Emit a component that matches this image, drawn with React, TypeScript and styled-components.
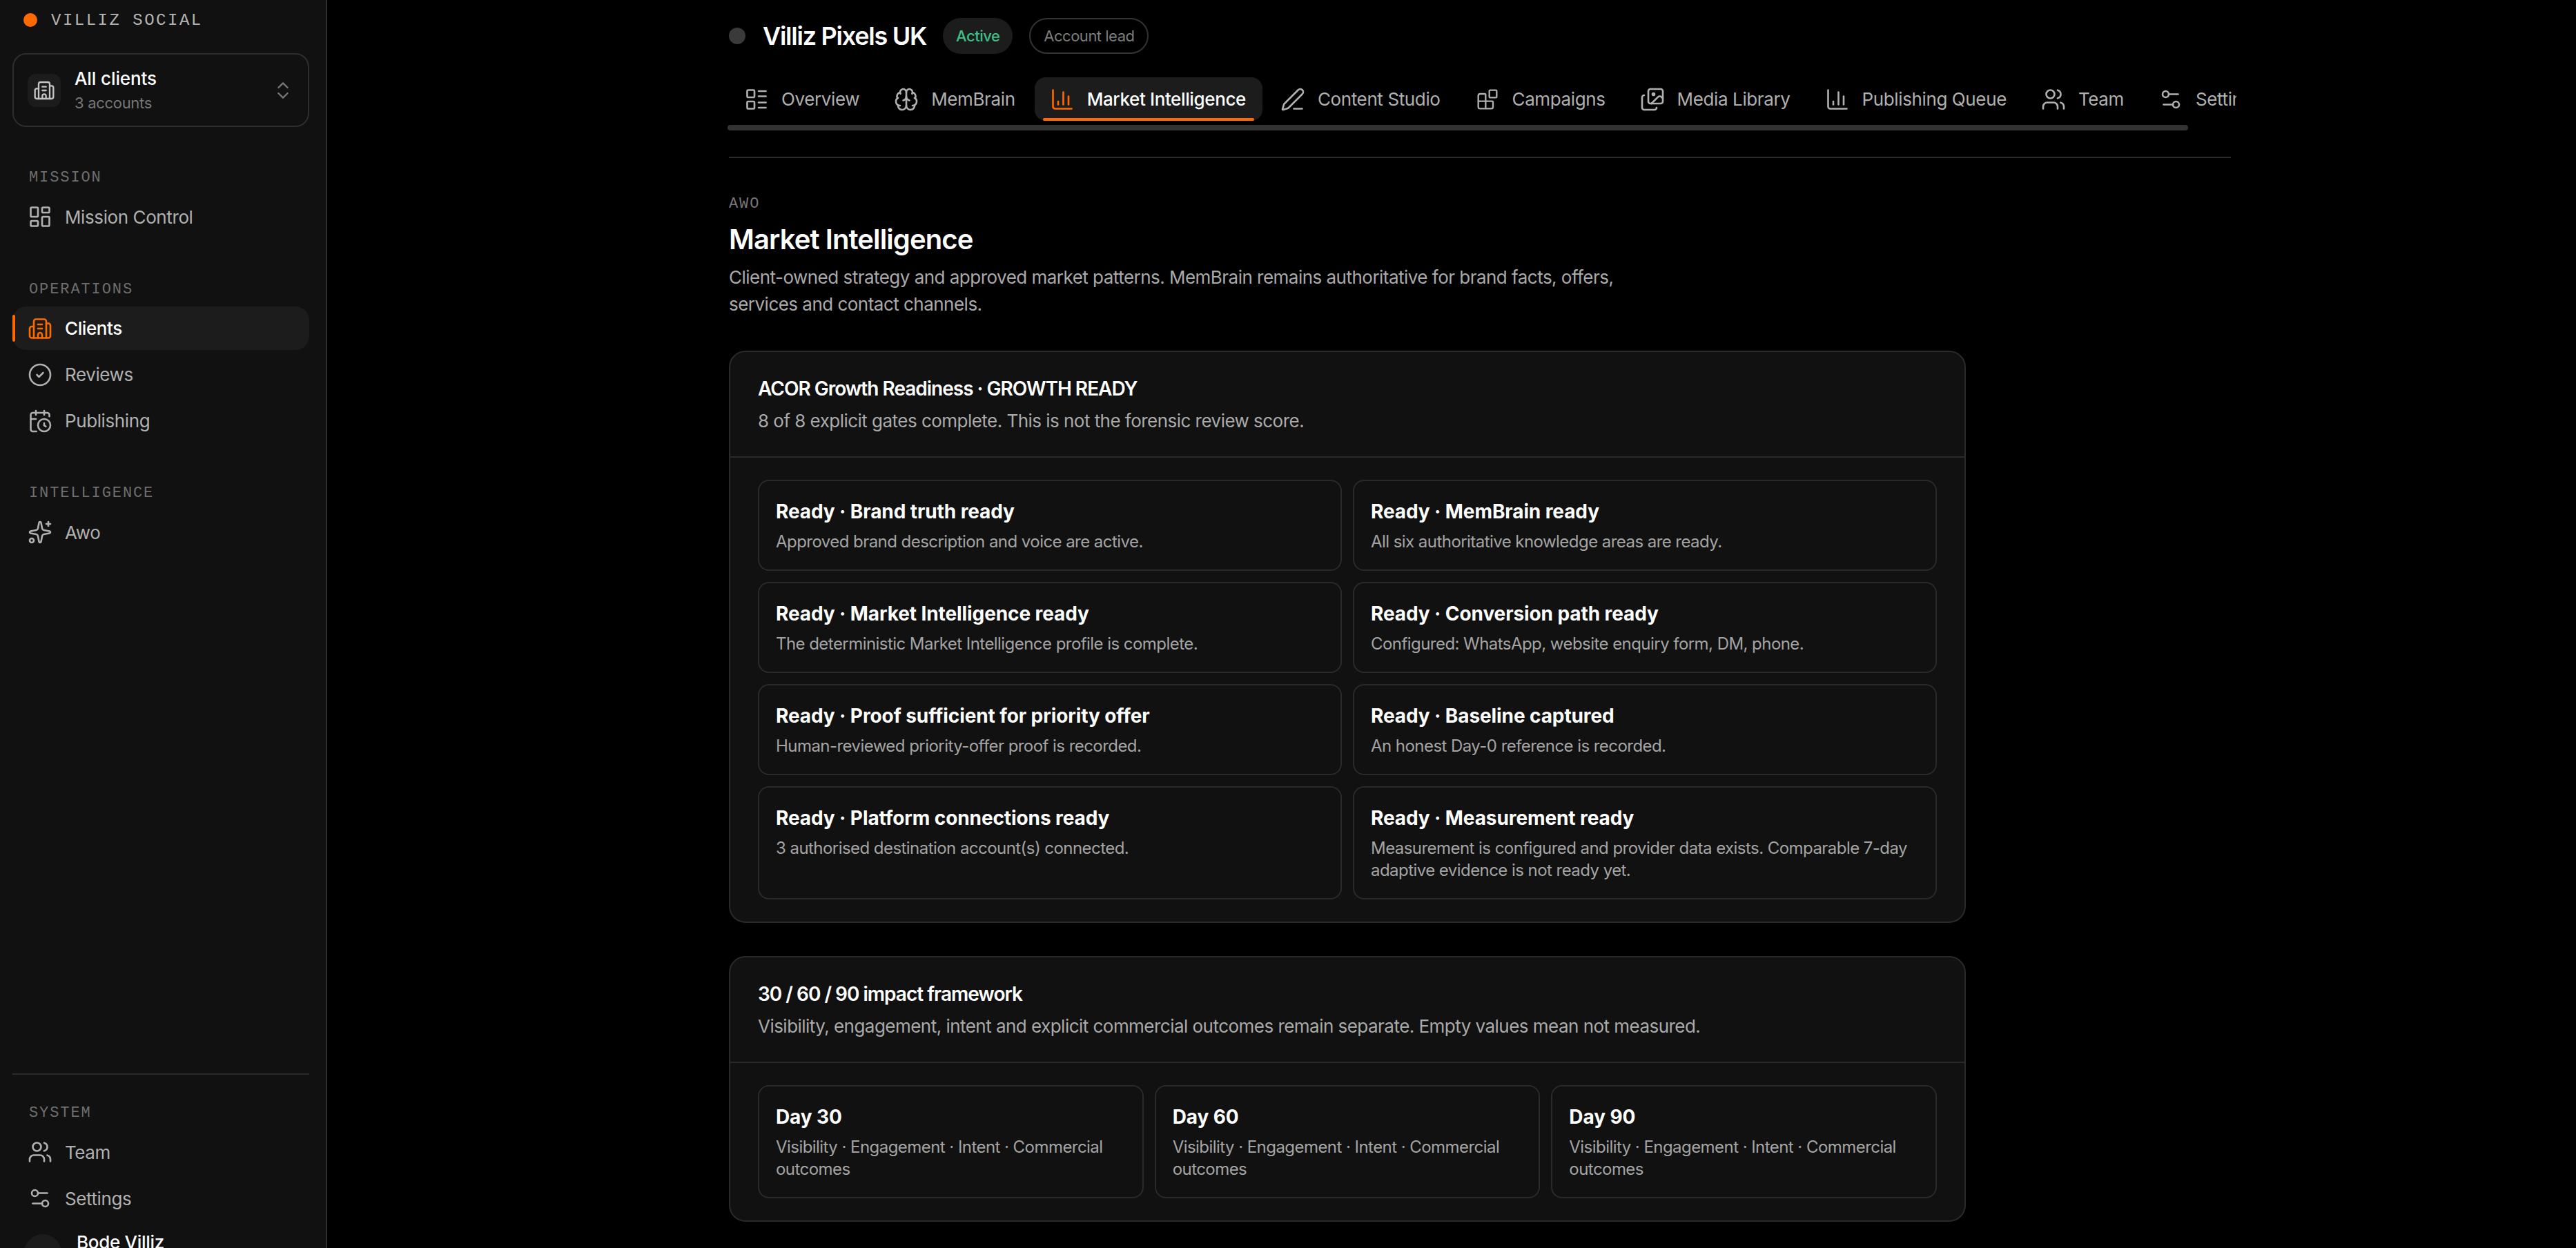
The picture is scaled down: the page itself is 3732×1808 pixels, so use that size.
import { FunctionComponent } from "react";
import styled, { createGlobalStyle } from "styled-components";
import {
  Blocks,
  Brain,
  Building2,
  CalendarClock,
  ChartColumn,
  ChevronsUpDown,
  CircleCheck,
  Images,
  LayoutDashboard,
  LayoutList,
  LucideIcon,
  PenLine,
  Settings2,
  Sparkles,
  Users,
} from "lucide-react";

const GlobalStyle = createGlobalStyle`
  html, body {
    margin: 0;
    height: 100%;
    background: #000;
    overflow: hidden;
  }
  * { box-sizing: border-box; }
  body {
    font-family: Inter, "Liberation Sans", sans-serif;
    color: #fff;
  }
`;

const Shell = styled.div`
  display: flex;
  height: 1808px;
  overflow: hidden;
`;

const Sidebar = styled.aside`
  width: 474px;
  flex-shrink: 0;
  height: 100%;
  display: flex;
  flex-direction: column;
  overflow: hidden;
  background: #111;
  border-right: 2px solid #2e2e2e;
  padding: 0 24px 0 18px;
`;

const Logo = styled.div`
  display: flex;
  align-items: center;
  gap: 20px;
  height: 24px;
  margin: 17px 0 36px 16px;
  font-family: "Liberation Mono", monospace;
  font-size: 24px;
  letter-spacing: 2.5px;
  color: #b4b4b4;
  flex-shrink: 0;
`;

const LogoDot = styled.span`
  width: 20px;
  height: 20px;
  border-radius: 50%;
  background: #ff6a00;
`;

const Switcher = styled.div`
  height: 107px;
  flex-shrink: 0;
  display: flex;
  align-items: center;
  padding: 0 20px;
  border: 2px solid #2e2e2e;
  border-radius: 20px;
  color: #777;
`;

const SwitcherIcon = styled.div`
  width: 48px;
  height: 48px;
  border-radius: 12px;
  background: #1c1c1c;
  display: flex;
  align-items: center;
  justify-content: center;
  color: #c4c4c4;
  margin-right: 20px;
`;

const SwitcherText = styled.div`
  flex: 1;
`;

const SwitcherName = styled.div`
  font-size: 26px;
  line-height: 36px;
  font-weight: 500;
  color: #fff;
  letter-spacing: -0.1px;
`;

const SwitcherMeta = styled.div`
  font-size: 22px;
  line-height: 34px;
  color: #777;
  letter-spacing: -0.3px;
`;

const NavArea = styled.nav`
  flex: 1;
  min-height: 0;
`;

const NavSection = styled.div`
  margin-top: 60px;
`;

const NavLabel = styled.div`
  height: 24px;
  line-height: 27px;
  margin: 0 0 14.5px 24px;
  font-family: "Liberation Mono", monospace;
  font-size: 22px;
  letter-spacing: 1.9px;
  color: #6e6e6e;
`;

const NavItem = styled.div<{ $active?: boolean }>`
  position: relative;
  height: 63px;
  margin-bottom: 4px;
  display: flex;
  align-items: center;
  gap: 18px;
  padding-left: 22px;
  border-radius: 20px;
  font-size: 26px;
  letter-spacing: -0.4px;
  font-weight: ${(p) => (p.$active ? 500 : 400)};
  background: ${(p) => (p.$active ? "#1c1c1c" : "transparent")};
  color: ${(p) => (p.$active ? "#fff" : "#b0b0b0")};
  svg {
    color: ${(p) => (p.$active ? "#ff6a00" : "#b0b0b0")};
  }
`;

const ActiveBar = styled.span`
  position: absolute;
  left: 0;
  top: 12px;
  bottom: 12px;
  width: 4px;
  border-radius: 2px;
  background: #ff6a00;
`;

const SidebarFooter = styled.div`
  height: 253px;
  flex-shrink: 0;
  border-top: 2px solid #2a2a2a;
  padding-top: 42px;
`;

const SystemItems = styled.div`
  margin-bottom: 20px;
`;

const UserRow = styled.div`
  display: flex;
  align-items: flex-start;
  gap: 22px;
  padding-left: 17px;
`;

const Avatar = styled.div`
  width: 54px;
  height: 54px;
  border-radius: 50%;
  background: #1c1c1c;
`;

const UserName = styled.div`
  font-size: 26px;
  line-height: 36px;
  font-weight: 500;
  margin-top: -6px;
  letter-spacing: -0.3px;
`;

const Main = styled.main`
  flex: 1;
  min-width: 0;
  background: #000;
  padding: 26px 500px 0 582px;
`;

const ClientHeader = styled.div`
  display: flex;
  align-items: center;
  height: 52px;
`;

const ClientDot = styled.span`
  width: 24px;
  height: 24px;
  border-radius: 50%;
  background: #3a3a3a;
  margin-right: 25px;
`;

const ClientName = styled.h2`
  margin: 0 24px 0 0;
  font-size: 36px;
  font-weight: 600;
  letter-spacing: -1.25px;
`;

const Pill = styled.span<{ $outline?: boolean }>`
  height: 52px;
  display: flex;
  align-items: center;
  padding: 0 19px;
  margin-right: 24px;
  border-radius: 26px;
  font-size: 22px;
  letter-spacing: -0.5px;
  background: ${(p) => (p.$outline ? "transparent" : "#1c1c1c")};
  border: ${(p) => (p.$outline ? "2px solid #333" : "none")};
  color: ${(p) => (p.$outline ? "#7d7d7d" : "#3fbf87")};
  font-weight: ${(p) => (p.$outline ? 400 : 500)};
`;

const TabScroller = styled.div`
  width: 2184px;
  margin-top: 34px;
  overflow: hidden;
`;

const TabRow = styled.div`
  display: flex;
  gap: 4px;
  width: max-content;
`;

const TabIconBox = styled.span`
  width: 36px;
  height: 36px;
  display: flex;
  align-items: center;
  justify-content: center;
`;

const Tab = styled.div<{ $active?: boolean }>`
  position: relative;
  height: 63px;
  display: flex;
  align-items: center;
  gap: 18px;
  padding: 0 24px 0 22px;
  border-radius: 16px;
  font-size: 26px;
  letter-spacing: -0.38px;
  font-weight: ${(p) => (p.$active ? 500 : 400)};
  background: ${(p) => (p.$active ? "#1c1c1c" : "transparent")};
  color: ${(p) => (p.$active ? "#fff" : "#b0b0b0")};
  svg {
    color: ${(p) => (p.$active ? "#ff6a00" : "#b0b0b0")};
  }
`;

const TabUnderline = styled.span`
  position: absolute;
  left: 12px;
  right: 12px;
  bottom: 0;
  height: 4px;
  border-radius: 2px;
  background: #ff6a00;
`;

const ScrollThumb = styled.div`
  width: 2116px;
  height: 8px;
  margin: 6px 0 0 -2px;
  border-radius: 4px;
  background: #333;
`;

const Rule = styled.hr`
  margin: 38px 0 0;
  border: none;
  height: 2px;
  background: #2a2a2a;
`;

const Eyebrow = styled.div`
  margin-top: 54px;
  height: 24px;
  line-height: 26px;
  font-family: "Liberation Mono", monospace;
  font-size: 22px;
  letter-spacing: 1.9px;
  color: #777;
`;

const PageTitle = styled.h1`
  margin: 12px 0 0;
  font-size: 40px;
  line-height: 56px;
  font-weight: 600;
  letter-spacing: -0.9px;
`;

const PageIntro = styled.p`
  margin: 8px 0 0;
  max-width: 1290px;
  font-size: 26px;
  line-height: 38.5px;
  color: #aaa;
  letter-spacing: -0.52px;
`;

const Panel = styled.section`
  width: 1792px;
  margin-top: 48px;
  background: #111;
  border: 2px solid #2a2a2a;
  border-radius: 24px;
`;

const PanelHead = styled.div`
  padding: 33px 40px 32px;
  border-bottom: 2px solid #2a2a2a;
`;

const PanelTitle = styled.h3`
  margin: 0;
  font-size: 28px;
  line-height: 40px;
  font-weight: 600;
  letter-spacing: -1px;
`;

const PanelSub = styled.p`
  margin: 8px 0 0;
  font-size: 26px;
  line-height: 38px;
  color: #aaa;
  letter-spacing: -0.53px;
`;

const PanelGrid = styled.div<{ $cols: number }>`
  display: grid;
  grid-template-columns: repeat(${(p) => p.$cols}, 1fr);
  gap: 16px;
  padding: 32px 40px;
`;

const Gate = styled.div`
  border: 2px solid #2a2a2a;
  border-radius: 16px;
  padding: 24px;
`;

const GateTitle = styled.div`
  font-size: 28px;
  line-height: 40px;
  font-weight: 700;
  letter-spacing: -0.1px;
`;

const GateText = styled.div`
  margin-top: 8px;
  font-size: 24px;
  line-height: 32px;
  color: #a4a4a4;
  letter-spacing: -0.55px;
`;

type NavEntry = { label: string; icon: LucideIcon; active?: boolean; iconSize?: number };

const navSections: { title: string; items: NavEntry[] }[] = [
  { title: "MISSION", items: [{ label: "Mission Control", icon: LayoutDashboard }] },
  {
    title: "OPERATIONS",
    items: [
      { label: "Clients", icon: Building2, active: true },
      { label: "Reviews", icon: CircleCheck },
      { label: "Publishing", icon: CalendarClock },
    ],
  },
  { title: "INTELLIGENCE", items: [{ label: "Awo", icon: Sparkles }] },
];

const tabs: NavEntry[] = [
  { label: "Overview", icon: LayoutList },
  { label: "MemBrain", icon: Brain },
  { label: "Market Intelligence", icon: ChartColumn, active: true },
  { label: "Content Studio", icon: PenLine },
  { label: "Campaigns", icon: Blocks, iconSize: 32 },
  { label: "Media Library", icon: Images },
  { label: "Publishing Queue", icon: ChartColumn },
  { label: "Team", icon: Users },
  { label: "Settings", icon: Settings2 },
];

const gates = [
  ["Ready · Brand truth ready", "Approved brand description and voice are active."],
  ["Ready · MemBrain ready", "All six authoritative knowledge areas are ready."],
  ["Ready · Market Intelligence ready", "The deterministic Market Intelligence profile is complete."],
  ["Ready · Conversion path ready", "Configured: WhatsApp, website enquiry form, DM, phone."],
  ["Ready · Proof sufficient for priority offer", "Human-reviewed priority-offer proof is recorded."],
  ["Ready · Baseline captured", "An honest Day-0 reference is recorded."],
  ["Ready · Platform connections ready", "3 authorised destination account(s) connected."],
  [
    "Ready · Measurement ready",
    "Measurement is configured and provider data exists. Comparable 7-day adaptive evidence is not ready yet.",
  ],
];

const days = ["Day 30", "Day 60", "Day 90"];

const renderNavItem = ({ label, icon: Icon, active }: NavEntry) => (
  <NavItem key={label} $active={active}>
    {active && <ActiveBar />}
    <Icon size={36} strokeWidth={1.75} />
    {label}
  </NavItem>
);

const App: FunctionComponent = () => {
  return (
    <Shell>
      <GlobalStyle />
      <Sidebar>
        <Logo>
          <LogoDot />
          VILLIZ SOCIAL
        </Logo>
        <Switcher>
          <SwitcherIcon>
            <Building2 size={32} strokeWidth={1.75} />
          </SwitcherIcon>
          <SwitcherText>
            <SwitcherName>All clients</SwitcherName>
            <SwitcherMeta>3 accounts</SwitcherMeta>
          </SwitcherText>
          <ChevronsUpDown size={32} strokeWidth={1.75} />
        </Switcher>
        <NavArea>
          {navSections.map((section) => (
            <NavSection key={section.title}>
              <NavLabel>{section.title}</NavLabel>
              {section.items.map(renderNavItem)}
            </NavSection>
          ))}
        </NavArea>
        <SidebarFooter>
          <NavLabel>SYSTEM</NavLabel>
          <SystemItems>
            {renderNavItem({ label: "Team", icon: Users })}
            {renderNavItem({ label: "Settings", icon: Settings2 })}
          </SystemItems>
          <UserRow>
            <Avatar />
            <UserName>Bode Villiz</UserName>
          </UserRow>
        </SidebarFooter>
      </Sidebar>
      <Main>
        <ClientHeader>
          <ClientDot />
          <ClientName>Villiz Pixels UK</ClientName>
          <Pill>Active</Pill>
          <Pill $outline>Account lead</Pill>
        </ClientHeader>
        <TabScroller>
          <TabRow>
            {tabs.map(({ label, icon: Icon, active, iconSize }) => (
              <Tab key={label} $active={active}>
                <TabIconBox>
                  <Icon size={iconSize ?? 36} strokeWidth={1.75} />
                </TabIconBox>
                {label}
                {active && <TabUnderline />}
              </Tab>
            ))}
          </TabRow>
        </TabScroller>
        <ScrollThumb />
        <Rule />
        <Eyebrow>AWO</Eyebrow>
        <PageTitle>Market Intelligence</PageTitle>
        <PageIntro>
          Client-owned strategy and approved market patterns. MemBrain remains authoritative for
          brand facts, offers, services and contact channels.
        </PageIntro>
        <Panel>
          <PanelHead>
            <PanelTitle>ACOR Growth Readiness · GROWTH READY</PanelTitle>
            <PanelSub>8 of 8 explicit gates complete. This is not the forensic review score.</PanelSub>
          </PanelHead>
          <PanelGrid $cols={2}>
            {gates.map(([title, text]) => (
              <Gate key={title}>
                <GateTitle>{title}</GateTitle>
                <GateText>{text}</GateText>
              </Gate>
            ))}
          </PanelGrid>
        </Panel>
        <Panel>
          <PanelHead>
            <PanelTitle>30 / 60 / 90 impact framework</PanelTitle>
            <PanelSub>
              Visibility, engagement, intent and explicit commercial outcomes remain separate. Empty
              values mean not measured.
            </PanelSub>
          </PanelHead>
          <PanelGrid $cols={3}>
            {days.map((day) => (
              <Gate key={day}>
                <GateTitle>{day}</GateTitle>
                <GateText>Visibility · Engagement · Intent · Commercial outcomes</GateText>
              </Gate>
            ))}
          </PanelGrid>
        </Panel>
      </Main>
    </Shell>
  );
};

export default App;
